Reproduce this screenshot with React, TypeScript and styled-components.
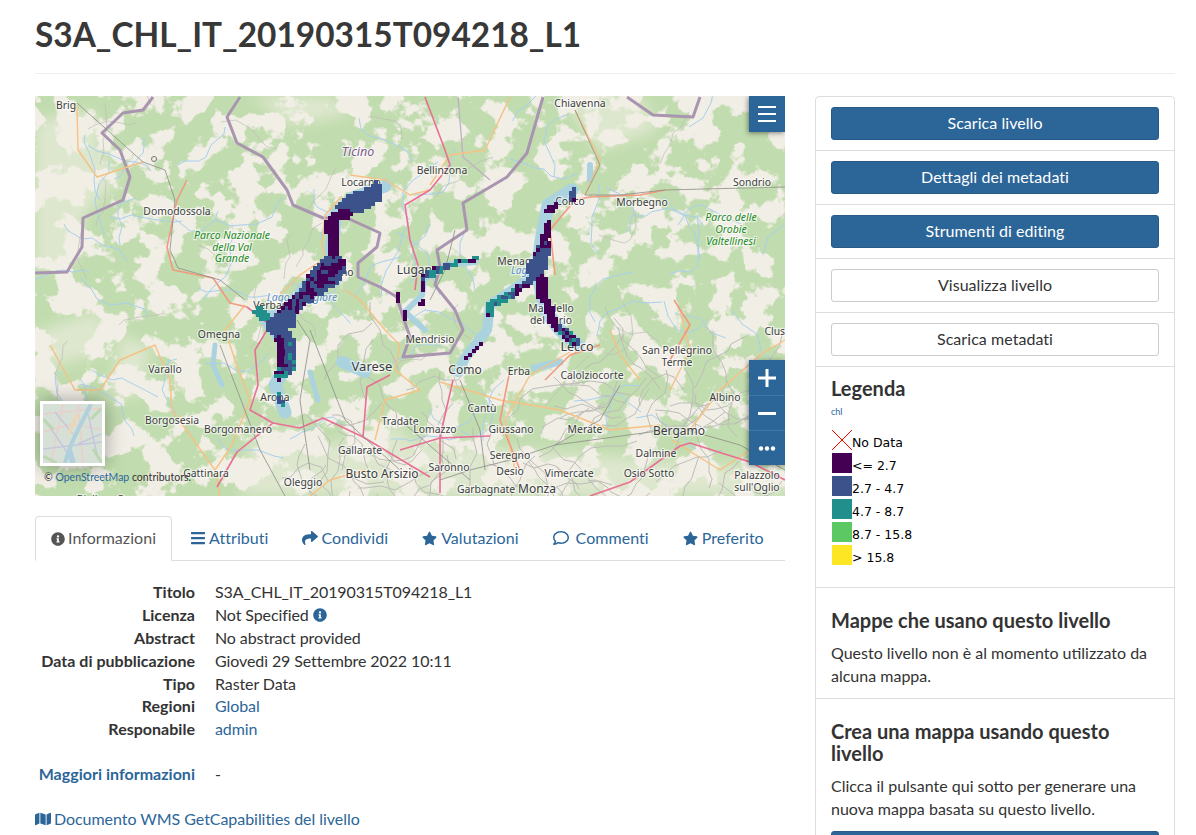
import React from "react";
import styled, { createGlobalStyle } from "styled-components";
import { FaBars, FaInfoCircle, FaMap, FaRegComment, FaShare, FaStar } from "react-icons/fa";

const BLUE = "#2c6699";

const GlobalStyle = createGlobalStyle`
  html, body { margin: 0; padding: 0; background: #fff; height: 835px; overflow: hidden; }
  body { font-family: Lato, "Open Sans", sans-serif; font-size: 16px; line-height: 1.42857; color: #333; }
  * { box-sizing: border-box; }
  a { color: ${BLUE}; text-decoration: none; }
`;

// ---- map data, all in page coordinates ----
const PALE_PATCHES = [
  "M35 120 L95 110 L100 150 L120 180 L85 215 L75 265 L35 270Z",
  "M250 96 L330 96 L350 115 L290 125Z",
  "M120 335 L150 345 L140 395 L110 400Z",
  "M40 330 L100 310 L105 350 L45 370Z",
  "M250 440 L290 430 L320 496 L240 496Z",
  "M400 440 L785 470 L785 496 L400 496Z",
  "M560 96 L640 96 L660 130 L600 150Z",
  "M290 455 L400 425 L430 496 L300 496Z",
];
const BORDERS = [
  "M153 97 L143 110 L123 113 L102 133 L120 150 L130 177 L123 200 L83 218 L82 247 L67 272 L35 273",
  "M240 97 L227 117 L237 143 L263 157 L287 190 L293 205 L323 218 L347 218 L380 233 L377 247 L358 263 L358 277 L380 287 L397 297 L403 317 L410 337 L403 357 L450 353 L463 330 L455 310 L435 285 L440 267 L437 250 L467 230 L463 203 L507 177 L527 153 L543 97",
  "M627 97 L653 115 L693 117 L700 97",
];
const ORANGE_ROADS = [
  "M77 107 L78 150 L97 177 L143 162",
  "M510 97 L485 150 L450 155 L430 185",
  "M575 110 L600 160 L585 195",
  "M350 175 L385 180 L410 195 L430 190",
  "M342 196 L325 215 L322 245 L325 258 L300 275 L275 300",
  "M345 290 L360 300 L385 330 L400 345",
  "M245 305 L225 330 L235 360 L250 400 L232 445 L215 470",
  "M50 345 L75 390 L100 390 L120 360 L155 345 L170 380 L172 410 L215 470 L220 496",
  "M400 345 L395 370 L420 390 L385 400 L375 440",
  "M440 382 L500 400 L560 410 L610 430 L660 425",
  "M570 352 L530 375 L505 420 L515 470",
  "M672 440 L720 470 L750 450 L785 430",
  "M785 340 L760 355 L720 390 L690 430",
  "M365 470 L330 480 L310 496",
  "M610 330 L620 355 L640 380",
  "M670 390 L690 350 L680 310",
];
const SALMON_ROADS = [
  "M187 180 L177 200 L167 247 L173 270 L213 278 L230 303 L247 307",
  "M590 197 L640 195 L665 190",
  "M555 275 L550 230 L575 200 L590 197",
  "M545 380 L570 355 L600 345",
  "M674 300 L690 325 L670 360",
  "M510 370 L500 420 L520 470",
];
const PINK_ROADS = [
  "M425 97 L445 150 L450 165 L430 190 L405 205 L410 240 L418 265 L415 290",
  "M247 307 L270 325 L255 350 L258 385 L250 410 L273 423 L300 428 L323 418 L363 437 L430 477",
  "M273 423 L237 452 L217 487",
  "M363 437 L367 387 L390 375",
  "M453 380 L440 437 L440 493",
  "M400 450 L440 438 L490 436",
  "M590 496 L630 482 L680 446 L690 443 L750 462 L785 480",
];
const RAILS = [
  "M77 103 L143 162",
  "M143 162 L165 170 L175 200 L170 250 L178 268 L220 280 L245 300",
  "M455 230 L445 270 L430 300",
  "M575 110 L600 165 L585 195 L620 195 L665 190 L785 187",
  "M297 320 L310 340 L300 400 L310 470",
  "M310 330 L345 420 L400 470",
  "M220 345 L260 450 L285 496",
  "M400 420 L470 480",
  "M460 380 L480 430 L485 470",
  "M620 385 L600 420 L555 445 L510 460 L470 470 L440 480",
  "M555 445 L680 428 L740 445 L785 470",
];
const LAKES = [
  { d: "M385 186 L352 198 L336 215 L331 250 L334 265 L305 288 L285 312 L265 318 L282 340 L289 362 L275 385 L285 412", w: 13 },
  { d: "M572 190 L548 205 L542 235 L537 270 L545 310 L560 330 L578 345", w: 13 },
  { d: "M530 278 L490 305 L487 330 L465 358 L458 372", w: 10 },
  { d: "M475 262 L445 265 L424 280 L422 295 L405 312 L425 330", w: 6 },
  { d: "M342 362 L365 372", w: 12 },
  { d: "M215 345 L213 365 L222 385", w: 5 },
  { d: "M534 368 L560 362", w: 7 },
  { d: "M310 372 L318 400", w: 5 },
  { d: "M590 165 L590 180", w: 6 },
];

type Band = { pts: number[]; w: number; colors: string[] };
const DARK = "#440154";
const MID = "#3b528b";
const TEAL = "#21908c";
const BANDS: Band[] = [
  { pts: [372, 187, 373, 192], w: 13, colors: [MID] },
  { pts: [364, 197, 345, 205], w: 17, colors: [MID] },
  { pts: [339, 212, 345, 212], w: 8, colors: [DARK] },
  { pts: [331, 220, 332, 230], w: 14, colors: [DARK] },
  { pts: [333, 234, 334, 258], w: 9, colors: [DARK] },
  { pts: [332, 266, 316, 282], w: 25, colors: [MID, MID, MID, DARK] },
  { pts: [342, 260, 306, 288], w: 4, colors: [DARK] },
  { pts: [306, 290, 292, 304], w: 16, colors: [DARK, DARK, MID] },
  { pts: [292, 306, 284, 312], w: 14, colors: [MID, DARK] },
  { pts: [288, 316, 272, 322], w: 18, colors: [MID] },
  { pts: [256, 311, 265, 315], w: 10, colors: [TEAL] },
  { pts: [279, 330, 285, 345], w: 15, colors: [MID] },
  { pts: [286, 348, 288, 362], w: 18, colors: [MID, MID, MID, MID, MID, TEAL] },
  { pts: [277, 335, 281, 365], w: 4, colors: [DARK] },
  { pts: [283, 370, 276, 374], w: 8, colors: [TEAL, MID, DARK] },
  { pts: [279, 394, 281, 404], w: 3, colors: [MID, TEAL] },
  { pts: [570, 188, 571, 197], w: 4, colors: [DARK, MID] },
  { pts: [553, 205, 547, 208], w: 5, colors: [DARK, TEAL] },
  { pts: [546, 222, 545, 240], w: 7, colors: [DARK] },
  { pts: [543, 244, 540, 258], w: 14, colors: [DARK, MID, MID] },
  { pts: [536, 262, 534, 272], w: 16, colors: [MID] },
  { pts: [541, 278, 543, 300], w: 9, colors: [DARK] },
  { pts: [546, 302, 553, 323], w: 6, colors: [DARK] },
  { pts: [556, 326, 574, 340], w: 4, colors: [MID, TEAL, DARK] },
  { pts: [528, 279, 512, 290], w: 5, colors: [DARK, MID] },
  { pts: [510, 292, 490, 303], w: 5, colors: [TEAL, MID] },
  { pts: [488, 306, 488, 312], w: 4, colors: [TEAL, DARK] },
  { pts: [480, 343, 466, 358], w: 3, colors: [DARK] },
  { pts: [478, 258, 446, 264], w: 3, colors: [TEAL, DARK] },
  { pts: [445, 264, 422, 273], w: 4, colors: [TEAL, DARK, MID] },
  { pts: [422, 278, 421, 288], w: 3, colors: [DARK, MID] },
  { pts: [418, 299, 418, 302], w: 4, colors: [DARK] },
  { pts: [397, 292, 398, 298], w: 1, colors: [DARK] },
  { pts: [403, 312, 405, 317], w: 2, colors: [DARK] },
];

const CELL = 3.6;

const rand = (n: number) => {
  const v = Math.sin(n * 127.1 + 311.7) * 43758.5453;
  return v - Math.floor(v);
};

const rasterCells = () => {
  const cells = new Map<string, string>();
  BANDS.forEach((band, bi) => {
    for (let i = 0; i + 3 < band.pts.length; i += 2) {
      const [x1, y1, x2, y2] = band.pts.slice(i, i + 4);
      const steps = Math.max(1, Math.ceil(Math.hypot(x2 - x1, y2 - y1) / 2));
      for (let s = 0; s <= steps; s++) {
        const cx = x1 + ((x2 - x1) * s) / steps;
        const cy = y1 + ((y2 - y1) * s) / steps;
        for (let dx = -band.w / 2; dx <= band.w / 2; dx += CELL) {
          for (let dy = -band.w / 2; dy <= band.w / 2; dy += CELL) {
            if (dx * dx + dy * dy > (band.w * band.w) / 4 + 3) continue;
            const gx = Math.round((cx + dx) / CELL);
            const gy = Math.round((cy + dy) / CELL);
            const pick = Math.floor(rand(gx * 31 + gy * 17 + bi) * band.colors.length);
            cells.set(`${gx}_${gy}`, band.colors[pick]);
          }
        }
      }
    }
  });
  return [...cells.entries()].map(([key, color]) => {
    const [gx, gy] = key.split("_").map(Number);
    return { x: gx * CELL, y: gy * CELL, color };
  });
};

// little wandering lines, for the thin roads and streams that fill the map
const wander = (seed: number, x0: number, y0: number, w: number, h: number, legs: number) => {
  let x = x0 + rand(seed) * w;
  let y = y0 + rand(seed + 0.5) * h;
  let angle = rand(seed + 0.7) * Math.PI * 2;
  let d = `M${x.toFixed(0)} ${y.toFixed(0)}`;
  for (let i = 0; i < legs; i++) {
    angle += (rand(seed + i * 1.3) - 0.5) * 1.6;
    const len = 6 + rand(seed + i * 2.1) * 12;
    x += Math.cos(angle) * len;
    y += Math.sin(angle) * len;
    d += ` L${x.toFixed(0)} ${y.toFixed(0)}`;
  }
  return d;
};

const GREY_MINOR = Array.from({ length: 80 }, (_, i) => wander(i + 1, 300, 370, 480, 130, 6));
const GREY_NORTH = Array.from({ length: 24 }, (_, i) => wander(i + 101, 40, 100, 740, 270, 5));
const STREAMS = Array.from({ length: 60 }, (_, i) => wander(i + 201, 40, 100, 740, 340, 6));

type Label = { t: string; x: number; y: number; s?: number; tone?: "place" | "park" | "water" | "region" };
const LABELS: Label[] = [
  { t: "Brig", x: 66, y: 105 },
  { t: "Chiavenna", x: 580, y: 103 },
  { t: "Ticino", x: 358, y: 152, s: 12.5, tone: "region" },
  { t: "Bellinzona", x: 442, y: 170 },
  { t: "Sondrio", x: 752, y: 182 },
  { t: "Locarno", x: 361, y: 182 },
  { t: "Colico", x: 570, y: 201 },
  { t: "Morbegno", x: 642, y: 202 },
  { t: "Domodossola", x: 177, y: 211 },
  { t: "Parco Nazionale", x: 232, y: 235, s: 10.5, tone: "park" },
  { t: "della Val", x: 232, y: 247, s: 10.5, tone: "park" },
  { t: "Grande", x: 232, y: 258, s: 10.5, tone: "park" },
  { t: "Parco delle", x: 731, y: 217, s: 10.5, tone: "park" },
  { t: "Orobie", x: 731, y: 229, s: 10.5, tone: "park" },
  { t: "Valtellinesi", x: 731, y: 241, s: 10.5, tone: "park" },
  { t: "Lugano", x: 418, y: 270, s: 12 },
  { t: "Menaggio", x: 522, y: 261 },
  { t: "Luino", x: 340, y: 272 },
  { t: "Lago Maggiore", x: 302, y: 297, s: 10.5, tone: "water" },
  { t: "Verbania", x: 275, y: 305 },
  { t: "Lago", x: 522, y: 270, s: 10, tone: "water" },
  { t: "Mandello", x: 551, y: 308 },
  { t: "del Lario", x: 551, y: 320 },
  { t: "Omegna", x: 219, y: 334 },
  { t: "Clusone", x: 784, y: 331 },
  { t: "Mendrisio", x: 430, y: 339 },
  { t: "Lecco", x: 577, y: 347, s: 12.5 },
  { t: "San Pellegrino", x: 677, y: 350 },
  { t: "Terme", x: 677, y: 362 },
  { t: "Varese", x: 372, y: 367, s: 13 },
  { t: "Varallo", x: 165, y: 369 },
  { t: "Como", x: 465, y: 370, s: 12 },
  { t: "Erba", x: 519, y: 371 },
  { t: "Calolziocorte", x: 592, y: 375 },
  { t: "Arona", x: 275, y: 397 },
  { t: "Albino", x: 725, y: 397 },
  { t: "Cantù", x: 482, y: 408 },
  { t: "Borgosesia", x: 172, y: 420 },
  { t: "Tradate", x: 400, y: 421 },
  { t: "Borgomanero", x: 238, y: 429 },
  { t: "Lomazzo", x: 435, y: 429 },
  { t: "Giussano", x: 511, y: 429 },
  { t: "Merate", x: 585, y: 429 },
  { t: "Bergamo", x: 679, y: 431, s: 12 },
  { t: "Gallarate", x: 360, y: 450 },
  { t: "Dalmine", x: 656, y: 453 },
  { t: "Seregno", x: 510, y: 455 },
  { t: "Saronno", x: 449, y: 467 },
  { t: "Desio", x: 510, y: 471 },
  { t: "Gattinara", x: 206, y: 473 },
  { t: "Vimercate", x: 569, y: 473 },
  { t: "Osio Sotto", x: 649, y: 473 },
  { t: "Busto Arsizio", x: 382, y: 474, s: 12 },
  { t: "Palazzolo", x: 757, y: 475 },
  { t: "Oleggio", x: 303, y: 482 },
  { t: "sull'Oglio", x: 757, y: 487 },
  { t: "Garbagnate", x: 486, y: 489 },
  { t: "Monza", x: 537, y: 489, s: 12 },
  { t: "Biella", x: 90, y: 499 },
  { t: "Cossato", x: 136, y: 499 },
];

const LABEL_COLORS = { place: "#3d3d3d", park: "#1f8a1f", water: "#5d8fc9", region: "#7d5c8f" };

const INFO_ROWS: { k: string; v: React.ReactNode }[] = [
  { k: "Titolo", v: "S3A_CHL_IT_20190315T094218_L1" },
  { k: "Licenza", v: <>Not Specified <InfoGlyph /></> },
  { k: "Abstract", v: "No abstract provided" },
  { k: "Data di pubblicazione", v: "Giovedì 29 Settembre 2022 10:11" },
  { k: "Tipo", v: "Raster Data" },
  { k: "Regioni", v: <a href="#">Global</a> },
  { k: "Responabile", v: <a href="#">admin</a> },
];

const LEGEND = [
  { c: DARK, t: "<= 2.7" },
  { c: MID, t: "2.7 - 4.7" },
  { c: TEAL, t: "4.7 - 8.7" },
  { c: "#5cc863", t: "8.7 - 15.8" },
  { c: "#fde725", t: "> 15.8" },
];

function InfoGlyph() {
  return <FaInfoCircle color={BLUE} size={14} style={{ verticalAlign: "-1px" }} />;
}

// ---- styled parts ----
const Page = styled.div`
  width: 1196px;
  height: 835px;
  overflow: hidden;
  padding: 0 21px 0 35px;
`;

const TitleBar = styled.div`
  height: 74px;
  border-bottom: 1px solid #eee;
  margin-bottom: 22px;
`;

const Title = styled.h1`
  margin: 0;
  padding-top: 14px;
  font-size: 33.4px;
  line-height: 40px;
  font-weight: 700;
  color: #383838;
`;

const Columns = styled.div`
  display: grid;
  grid-template-columns: 750px 360px;
  gap: 30px;
  align-items: start;
`;

const MapFrame = styled.div`
  position: relative;
  width: 750px;
  height: 400px;
  overflow: hidden;
  background: #f2efe9;
`;

const MapSvg = styled.svg`
  display: block;
  width: 750px;
  height: 400px;
`;

const PlaceLabel = styled.text<{ $size: number; $tone: keyof typeof LABEL_COLORS }>`
  font-family: "Noto Sans", "Open Sans", sans-serif;
  font-size: ${(p) => p.$size}px;
  font-style: ${(p) => (p.$tone === "place" ? "normal" : "italic")};
  fill: ${(p) => LABEL_COLORS[p.$tone]};
  stroke: rgba(255, 255, 255, 0.6);
  stroke-width: 2.5px;
  paint-order: stroke;
  text-anchor: middle;
`;

const ControlButton = styled.button<{ $divided?: boolean }>`
  display: flex;
  align-items: center;
  justify-content: center;
  width: 36px;
  height: 35px;
  padding: 0;
  border: 0;
  border-top: ${(p) => (p.$divided ? "1px solid #3f77a8" : "0")};
  background: ${BLUE};
`;

const MenuControl = styled.div`
  position: absolute;
  top: 0;
  right: 0;
  width: 36px;
  height: 36px;
  background: ${BLUE};
  display: flex;
  flex-direction: column;
  align-items: center;
  justify-content: center;
  gap: 5px;
  box-shadow: -1px 1px 5px rgba(0, 0, 0, 0.45);
`;

const MenuLine = styled.span`
  width: 18px;
  height: 2px;
  background: #fff;
`;

const ZoomControl = styled.div`
  position: absolute;
  top: 264px;
  right: 0;
  width: 36px;
  box-shadow: -1px 1px 5px rgba(0, 0, 0, 0.45);
`;

const Thumbnail = styled.div`
  position: absolute;
  left: 5px;
  top: 305px;
  width: 65px;
  height: 65px;
  border: 3px solid #fff;
  box-shadow: 0 0 18px rgba(0, 0, 0, 0.35);
  overflow: hidden;
  background: #cfdcd6;
`;

const ThumbArt = styled.svg`
  display: block;
  width: 59px;
  height: 59px;
  filter: blur(0.6px);
`;

const Attribution = styled.div`
  position: absolute;
  left: 9px;
  top: 374px;
  font-size: 10.5px;
  line-height: 14px;
  color: #333;
`;

const Tabs = styled.ul`
  display: flex;
  list-style: none;
  margin: 20px 0 0;
  padding: 0;
  height: 45px;
  border-bottom: 1px solid #ddd;
`;

const Tab = styled.li<{ $active?: boolean }>`
  height: 45px;
  margin-right: 2px;
  padding: 10px 15px;
  white-space: nowrap;
  letter-spacing: 0.05px;
  color: ${(p) => (p.$active ? "#555" : BLUE)};
  background: ${(p) => (p.$active ? "#fff" : "transparent")};
  border: 1px solid ${(p) => (p.$active ? "#ddd" : "transparent")};
  border-bottom-color: ${(p) => (p.$active ? "#fff" : "transparent")};
  border-radius: 4px 4px 0 0;
  svg {
    vertical-align: -2px;
    margin-right: 3px;
  }
`;

const StarGlyph = styled(FaStar)`
  && {
    margin-right: 4px;
  }
`;

const CommentGlyph = styled(FaRegComment)`
  && {
    margin-right: 7px;
  }
`;

const InfoList = styled.dl`
  display: grid;
  grid-template-columns: 160px 1fr;
  column-gap: 20px;
  margin: 20.14px 0 0;
`;

const InfoKey = styled.dt`
  font-weight: 700;
  text-align: right;
  white-space: nowrap;
  letter-spacing: 0.02px;
`;

const InfoValue = styled.dd`
  margin: 0;
  letter-spacing: -0.1px;
`;

const MoreRow = styled(InfoList)`
  margin-top: 21.86px;
`;

const DocLink = styled.a`
  display: block;
  margin-top: 22px;
  letter-spacing: -0.05px;
  svg {
    vertical-align: -2px;
    margin-right: 3px;
  }
`;

const Panel = styled.div`
  border: 1px solid #ddd;
  border-radius: 4px;
`;

const PanelItem = styled.div`
  padding: 10px 15px;
  border-bottom: 1px solid #ddd;
`;

const ActionButton = styled.button<{ $primary?: boolean }>`
  display: block;
  width: 100%;
  height: 33px;
  padding: 0;
  font: inherit;
  font-size: 16px;
  letter-spacing: 0.05px;
  color: ${(p) => (p.$primary ? "#fff" : "#333")};
  background: ${(p) => (p.$primary ? BLUE : "#fff")};
  border: 1px solid ${(p) => (p.$primary ? "#275a87" : "#ccc")};
  border-radius: 3px;
`;

const PanelHeading = styled.h4`
  margin: 0 0 10px;
  font-size: 20px;
  line-height: 22px;
  font-weight: 700;
  color: #333;
`;

const PanelText = styled.p`
  margin: 0;
  line-height: 23px;
`;

const SecondaryItem = styled(PanelItem)`
  padding-top: 21px;
  padding-bottom: 11px;
`;

const LegendItem = styled(PanelItem)`
  height: 221px;
  padding-top: 9px;
`;

const LegendTitle = styled.h4`
  margin: 0;
  font-size: 20px;
  line-height: 24px;
  font-weight: 700;
  color: #333;
`;

const LegendLayer = styled.a`
  display: block;
  margin-top: 5px;
  margin-bottom: 9px;
  font-size: 9px;
  line-height: 14px;
`;

const LegendRow = styled.div`
  display: flex;
  align-items: center;
  height: 23px;
  padding-left: 1px;
  font-family: "DejaVu Sans", sans-serif;
  font-size: 12.5px;
  color: #000;
  line-height: 20px;
`;

const LegendText = styled.span`
  padding-top: 6px;
`;

const Swatch = styled.span<{ $color: string }>`
  width: 20px;
  height: 20px;
  background: ${(p) => p.$color};
`;

const CrossMark = styled.svg`
  display: block;
  width: 20px;
  height: 20px;
`;

const CreateButton = styled(ActionButton)`
  margin-top: 11px;
`;

const CELLS = rasterCells();

const MapArt: React.FC = () => (
  <MapSvg viewBox="35 96 750 400" aria-label="Mappa">
    <defs>
      <filter id="forest" x="0" y="0" width="100%" height="100%" colorInterpolationFilters="sRGB">
        <feTurbulence type="fractalNoise" baseFrequency="0.035" numOctaves="5" seed="11" />
        <feColorMatrix
          type="matrix"
          values="0 0 0 0 0.757  0 0 0 0 0.863  0 0 0 0 0.682  16 0 0 0 -7.1"
        />
        <feGaussianBlur stdDeviation="0.5" />
      </filter>
      <filter id="soft" colorInterpolationFilters="sRGB">
        <feGaussianBlur stdDeviation="7" />
      </filter>
    </defs>
    <rect x="35" y="96" width="750" height="400" fill="#f1eee6" />
    <rect x="35" y="96" width="750" height="400" filter="url(#forest)" />
    <g filter="url(#soft)" opacity="0.6">
      {PALE_PATCHES.map((d) => (
        <path key={d} d={d} fill="#f1efe4" />
      ))}
    </g>
    <g fill="none" stroke="#a9d0ee" strokeWidth="1">
      {STREAMS.map((d) => (
        <path key={d} d={d} />
      ))}
    </g>
    <g fill="none" stroke="#bdbdb8" strokeWidth="1">
      {GREY_NORTH.map((d) => (
        <path key={d} d={d} opacity="0.7" />
      ))}
      {GREY_MINOR.map((d) => (
        <path key={d} d={d} />
      ))}
    </g>
    <g fill="none" stroke="#aad3df" strokeLinecap="round" strokeLinejoin="round">
      {LAKES.map((l) => (
        <path key={l.d} d={l.d} strokeWidth={l.w} />
      ))}
    </g>
    <g fill="none" stroke="#a995b0" strokeWidth="3" strokeLinejoin="round">
      {BORDERS.map((d) => (
        <path key={d} d={d} />
      ))}
    </g>
    <path d="M458 97 L463 157 L490 180" fill="none" stroke="#c0aec4" strokeWidth="1.3" />
    <g fill="none" strokeLinejoin="round">
      {ORANGE_ROADS.map((d) => (
        <path key={d} d={d} stroke="#f7c184" strokeWidth="1.4" />
      ))}
      {SALMON_ROADS.map((d) => (
        <path key={d} d={d} stroke="#f29a7e" strokeWidth="1.6" />
      ))}
      {PINK_ROADS.map((d) => (
        <path key={d} d={d} stroke="#e96f93" strokeWidth="1.6" />
      ))}
      {RAILS.map((d) => (
        <path key={d} d={d} stroke="#8b8b88" strokeWidth="0.8" />
      ))}
    </g>
    <circle cx="154" cy="159" r="2.5" fill="none" stroke="#777" />
    {LABELS.map((l) => (
      <PlaceLabel key={l.t} x={l.x} y={l.y + 4} $size={l.s ?? 10.4} $tone={l.tone ?? "place"}>
        {l.t}
      </PlaceLabel>
    ))}
    <g shapeRendering="crispEdges">
      {CELLS.map((c) => (
        <rect key={`${c.x}_${c.y}`} x={c.x} y={c.y} width={CELL + 0.4} height={CELL + 0.4} fill={c.color} />
      ))}
    </g>
  </MapSvg>
);

const MapControls: React.FC = () => (
  <>
    <MenuControl>
      <MenuLine />
      <MenuLine />
      <MenuLine />
    </MenuControl>
    <ZoomControl>
      <ControlButton aria-label="Zoom in">
        <svg width="18" height="18" viewBox="0 0 18 18" fill="#fff">
          <rect x="0" y="7.5" width="18" height="3" />
          <rect x="7.5" y="0" width="3" height="18" />
        </svg>
      </ControlButton>
      <ControlButton $divided aria-label="Zoom out">
        <svg width="18" height="3" viewBox="0 0 18 3" fill="#fff">
          <rect width="18" height="3" />
        </svg>
      </ControlButton>
      <ControlButton $divided aria-label="Altro">
        <svg width="18" height="5" viewBox="0 0 18 5" fill="#fff">
          <circle cx="3" cy="2.5" r="2.2" />
          <circle cx="9" cy="2.5" r="2.2" />
          <circle cx="15" cy="2.5" r="2.2" />
        </svg>
      </ControlButton>
    </ZoomControl>
    <Thumbnail>
      <ThumbArt viewBox="0 0 59 59">
        <rect width="59" height="59" fill="#d6e0d6" />
        <g fill="none">
          <path d="M0 10 L59 4 M0 28 L30 20 L59 26 M8 59 L20 0 M40 59 L35 0" stroke="#e9cfc8" strokeWidth="1.5" />
          <path d="M0 45 L59 38 M5 20 L25 50 M45 10 L55 55 M12 8 L30 30 M35 40 L58 30" stroke="#c5c8dc" strokeWidth="1.5" />
          <path d="M34 10 L26 30" stroke="#edd6b0" strokeWidth="3" />
          <path d="M0 52 L14 59 M50 45 L59 59 M0 15 L10 25 M48 15 L58 5" stroke="#bcd6b4" strokeWidth="3" />
          <path d="M22 59 C26 42 33 30 48 0" stroke="#b0d0dd" strokeWidth="4" />
          <path d="M30 59 L26 46" stroke="#b0d0dd" strokeWidth="6" />
        </g>
      </ThumbArt>
    </Thumbnail>
    <Attribution>
      © <a href="#">OpenStreetMap</a> contributors.
    </Attribution>
  </>
);

const App: React.FC = () => (
  <Page>
    <GlobalStyle />
    <TitleBar>
      <Title>S3A_CHL_IT_20190315T094218_L1</Title>
    </TitleBar>
    <Columns>
      <div>
        <MapFrame>
          <MapArt />
          <MapControls />
        </MapFrame>
        <Tabs>
          <Tab $active><FaInfoCircle size={14} />Informazioni</Tab>
          <Tab><FaBars size={16} />Attributi</Tab>
          <Tab><FaShare size={16} />Condividi</Tab>
          <Tab><StarGlyph size={15} />Valutazioni</Tab>
          <Tab><CommentGlyph size={16} />Commenti</Tab>
          <Tab><StarGlyph size={15} />Preferito</Tab>
        </Tabs>
        <InfoList>
          {INFO_ROWS.map((r) => (
            <React.Fragment key={r.k}>
              <InfoKey>{r.k}</InfoKey>
              <InfoValue>{r.v}</InfoValue>
            </React.Fragment>
          ))}
        </InfoList>
        <MoreRow>
          <InfoKey><a href="#">Maggiori informazioni</a></InfoKey>
          <InfoValue>-</InfoValue>
        </MoreRow>
        <DocLink href="#"><FaMap size={16} />Documento WMS GetCapabilities del livello</DocLink>
      </div>
      <Panel>
        <PanelItem><ActionButton $primary>Scarica livello</ActionButton></PanelItem>
        <PanelItem><ActionButton $primary>Dettagli dei metadati</ActionButton></PanelItem>
        <PanelItem><ActionButton $primary>Strumenti di editing</ActionButton></PanelItem>
        <PanelItem><ActionButton>Visualizza livello</ActionButton></PanelItem>
        <PanelItem><ActionButton>Scarica metadati</ActionButton></PanelItem>
        <LegendItem>
          <LegendTitle>Legenda</LegendTitle>
          <LegendLayer href="#">chl</LegendLayer>
          <LegendRow>
            <CrossMark viewBox="0 0 20 20">
              <path d="M0 0 L20 20 M20 0 L0 20" stroke="#f00" strokeWidth="1" />
            </CrossMark>
            <LegendText>No Data</LegendText>
          </LegendRow>
          {LEGEND.map((l) => (
            <LegendRow key={l.t}>
              <Swatch $color={l.c} />
              <LegendText>{l.t}</LegendText>
            </LegendRow>
          ))}
        </LegendItem>
        <SecondaryItem>
          <PanelHeading>Mappe che usano questo livello</PanelHeading>
          <PanelText>Questo livello non è al momento utilizzato da alcuna mappa.</PanelText>
        </SecondaryItem>
        <SecondaryItem>
          <PanelHeading>Crea una mappa usando questo livello</PanelHeading>
          <PanelText>Clicca il pulsante qui sotto per generare una nuova mappa basata su questo livello.</PanelText>
          <CreateButton $primary>Crea una mappa</CreateButton>
        </SecondaryItem>
      </Panel>
    </Columns>
  </Page>
);

export default App;
